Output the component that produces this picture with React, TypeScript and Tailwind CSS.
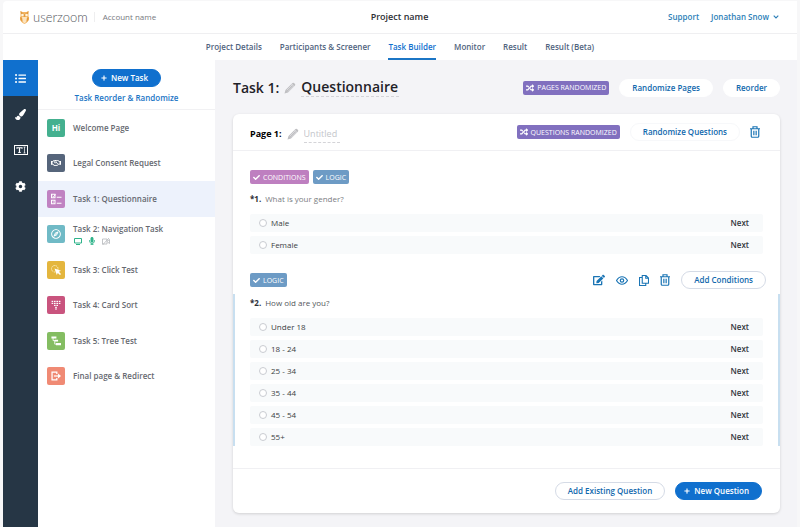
import type { ReactNode } from "react";
import { FaCheck, FaCog, FaListUl, FaPaintBrush, FaRandom, FaMicrophone, FaRegHandshake, FaRegCompass, FaEdit, FaPlus } from "react-icons/fa";

function Owl() {
  return (
    <svg viewBox="0 0 18 26" className="h-[13px] w-[9px]" aria-hidden="true">
      <path d="M1 0 L5 2 H13 L17 0 V10 L18 16 Q17 22 9 26 Q1 22 0 16 L1 10 Z" fill="#f3b562" />
      <path d="M4 12 H14 L13 21 L9 25 L5 21 Z" fill="#fbe3bf" />
      <path d="M1 0 L9 7 L17 0 L16 6 L9 12 L2 6 Z" fill="#e0983d" />
      <circle cx="5" cy="8" r="2.6" fill="#fff4dd" />
      <circle cx="13" cy="8" r="2.6" fill="#fff4dd" />
      <path d="M0 12 L4 14 L5 22 L1 18 Z M18 12 L14 14 L13 22 L17 18 Z" fill="#e59b3c" />
    </svg>
  );
}

function Pencil() {
  return (
    <svg viewBox="0 0 24 24" className="size-3 shrink-0" aria-hidden="true">
      <path d="M1 23 L3 16 L17 2 Q18.500 .8 20 2 L22 4 Q23.300 5.500 22 7 L8 21 Z" fill="#bfbfc2" />
      <path d="M5.500 16.500 L17 5 M8 19 L19.500 7.500 M15 4 L20 9" stroke="#ededf0" strokeWidth="1.200" />
    </svg>
  );
}

function Trash() {
  return (
    <svg viewBox="0 0 20 24" className="h-3 w-2.5" fill="none" stroke="currentColor" strokeWidth="2.400" aria-hidden="true">
      <path d="M0 5.500 H20 M6 5 V1.500 H14 V5 M2.500 6 V20.500 Q2.500 22.500 4.500 22.500 H15.500 Q17.500 22.500 17.500 20.500 V6" />
      <path d="M7.700 9.500 V18.500 M12.300 9.500 V18.500" />
    </svg>
  );
}

function Eye() {
  return (
    <svg viewBox="0 0 24 18" className="h-[9px] w-3" fill="none" stroke="currentColor" strokeWidth="2.400" aria-hidden="true">
      <path d="M1 9 Q5.500 1.500 12 1.500 Q18.500 1.500 23 9 Q18.500 16.500 12 16.500 Q5.500 16.500 1 9 Z" />
      <circle cx="12" cy="9" r="3.400" />
    </svg>
  );
}

function Copy() {
  return (
    <svg viewBox="0 0 20 22" className="h-[11px] w-2.5" fill="none" stroke="currentColor" strokeWidth="2.200" aria-hidden="true">
      <path d="M6.500 1 H14 L19 6 V16.500 H6.500 Z M13.500 1 V6.500 H19 M6 5 H1 V21 H13.500 V17" />
    </svg>
  );
}

function Plus() {
  return <FaPlus className="size-1.5" aria-hidden="true" />;
}

function TextTool() {
  return (
    <svg viewBox="0 0 28 20" className="h-2.5 w-3.5" fill="none" stroke="currentColor" aria-hidden="true">
      <rect x="1" y="1" width="26" height="18" strokeWidth="2" />
      <path d="M6 7.500 V5.500 H16 V7.500 M11 5.500 V15 M8.500 15 H13.500" strokeWidth="2.400" />
      <path d="M21 4 V16 M19 4 H23 M19 16 H23" strokeWidth="1.400" />
    </svg>
  );
}

function ChecklistGlyph() {
  return (
    <svg viewBox="0 0 24 24" className="size-3" fill="none" stroke="#fff" strokeWidth="2" aria-hidden="true">
      <rect x="3" y="2.500" width="7" height="7" />
      <rect x="3" y="14.500" width="7" height="7" />
      <path d="M5 6 L7 7.500 L11 3 M13.500 8.500 H23 M13.500 20.500 H23 M5.500 18 H7.500" />
    </svg>
  );
}

function ClickGlyph() {
  return (
    <svg viewBox="0 0 24 24" className="size-3" fill="none" aria-hidden="true">
      <circle cx="9.500" cy="9.500" r="6.500" stroke="#fdf3d0" strokeWidth="1.800" strokeDasharray="3 1.500" />
      <path d="M9 9 L22 13.500 L17.800 15.500 L22 20 L20 22 L15.500 17.800 L13.500 22 Z" fill="#fff" />
    </svg>
  );
}

function CardsGlyph() {
  const cells = [[1, 2], [7, 2], [13, 2], [19, 2], [1, 7], [7, 7], [13, 7], [19, 7], [7, 12], [13, 12], [10, 17], [10, 21]];
  return (
    <svg viewBox="0 0 24 25" className="size-2.5" fill="#fff" aria-hidden="true">
      {cells.map(([x, y]) => (
        <rect key={`${x}-${y}`} x={x} y={y} width="4" height="3" />
      ))}
    </svg>
  );
}

function TreeGlyph() {
  return (
    <svg viewBox="0 0 24 24" className="size-2.5" fill="#fff" aria-hidden="true">
      <path d="M1 1 H13 V6 H1 Z M9 9 H17 V13 H9 Z M12 17 H24 V22 H12 Z" />
      <path d="M5 5 V11 H10 M9 11 V19.500 H13" fill="none" stroke="#fff" strokeWidth="2" />
    </svg>
  );
}

function ExitGlyph() {
  return (
    <svg viewBox="0 0 24 24" className="size-2.5" fill="none" stroke="#fff" strokeWidth="3" aria-hidden="true">
      <path d="M14 7 V2.500 H2.500 V21.500 H14 V17" />
      <path d="M7 12 H19" />
      <path d="M17 6 L24 12 L17 18 Z" fill="#fff" stroke="none" />
    </svg>
  );
}

function Requirements() {
  return (
    <span className="flex items-center gap-1.5 pl-px">
      <svg viewBox="0 0 16 14" className="h-[7px] w-2" fill="none" stroke="#2fb38a" strokeWidth="2" role="img" aria-label="Screen recording">
        <path d="M1 1 H15 V10 H1 Z M4 13 H12" />
      </svg>
      <FaMicrophone className="size-2 text-[#2fb38a]" role="img" aria-label="Audio recording" />
      <svg viewBox="0 0 16 14" className="h-[7px] w-2" fill="none" stroke="#b4b6ba" strokeWidth="1.600" role="img" aria-label="Camera off">
        <path d="M1 2 H10 V12 H1 Z M11 6 L15 3 V11 L11 8 M1 14 L14 0" />
      </svg>
    </span>
  );
}

type Task = { name: string; color: string; glyph: ReactNode; active?: boolean; extras?: boolean };

const tasks: Task[] = [
  { name: "Welcome Page", color: "bg-[#44b08f]", glyph: <span className="text-[8px] font-bold">Hi</span> },
  { name: "Legal Consent Request", color: "bg-[#56657b]", glyph: <FaRegHandshake className="size-2.5" /> },
  { name: "Task 1: Questionnaire", color: "bg-[#c082c2]", glyph: <ChecklistGlyph />, active: true },
  { name: "Task 2: Navigation Task", color: "bg-[#70bac6]", glyph: <FaRegCompass className="size-2.5" />, extras: true },
  { name: "Task 3: Click Test", color: "bg-[#e4b63e]", glyph: <ClickGlyph /> },
  { name: "Task 4: Card Sort", color: "bg-[#c9547e]", glyph: <CardsGlyph /> },
  { name: "Task 5: Tree Test", color: "bg-[#84bd62]", glyph: <TreeGlyph /> },
  { name: "Final page & Redirect", color: "bg-[#f08a74]", glyph: <ExitGlyph /> },
];

const tabs = ["Project Details", "Participants & Screener", "Task Builder", "Monitor", "Result", "Result (Beta)"];

function Badge({ tone, icon, children }: { tone: string; icon: ReactNode; children: ReactNode }) {
  return (
    <span className={`flex h-3.5 items-center gap-[3px] rounded-xs px-[3px] text-[7px] leading-none font-medium whitespace-nowrap text-white ${tone}`}>
      {icon}
      {children}
    </span>
  );
}

const check = <FaCheck className="size-[7px]" aria-hidden="true" />;
const shuffle = <FaRandom className="size-2" aria-hidden="true" />;

function Pill({ variant, children }: { variant: string; children: ReactNode }) {
  return (
    <button type="button" className={`flex h-[18px] items-center justify-center gap-1 rounded-full border pr-3 whitespace-nowrap ${variant}`}>
      {children}
    </button>
  );
}

const solid = "border-[#1070ce] bg-[#1070ce] pl-2 font-semibold text-white";
const plain = "border-white bg-white pl-3 font-semibold text-[#1068ad]";
const outlined = "border-[#d5dbe6] bg-white pl-3 font-semibold text-[#1068ad]";
const faint = "border-[#f7f8fa] bg-white pl-3 font-semibold text-[#1068ad]";

function Question({ id, title, muted, answers }: { id: number; title: string; muted?: boolean; answers: string[] }) {
  return (
    <fieldset>
      <legend className={`mb-1.5 flex h-[18px] items-center gap-1 ${muted ? "text-[#7b7d82]" : "text-[#54575c]"}`}>
        <b className="text-[#2d3036]">*{id}.</b>
        {title}
      </legend>
      <ul className="flex flex-col gap-1">
        {answers.map((answer) => (
          <li key={answer} className="flex h-[18px] items-center justify-between rounded-xs bg-[#f8fafb] pr-3.5 pl-[9px]">
            <label className="flex items-center gap-1 text-[#3b3e43]">
              <input type="radio" name={`question-${id}`} className="size-2 appearance-none rounded-full border border-[#c9ccd1] bg-white checked:border-[#1070ce]" />
              {answer}
            </label>
            <span className="font-semibold text-[#33373d]">Next</span>
          </li>
        ))}
      </ul>
    </fieldset>
  );
}

export default function App() {
  return (
    <div className="min-h-screen bg-[#f7f7f8] px-[3px] pt-px font-['Open_Sans','Noto_Sans',sans-serif] text-[8px] leading-3 text-[#55585e]">
      <div className="flex min-h-[calc(100vh-1px)] flex-col overflow-hidden rounded-tl-sm">
        <header className="grid h-[33px] grid-cols-[1fr_auto_1fr] items-center border-b border-[#efeff1] bg-white pr-[18px] pl-[17px]">
          <div className="flex items-center">
            <a href="#home" className="flex items-center gap-1">
              <Owl />
              <span className="font-['Lato',sans-serif] text-[13px] leading-4 font-light text-[#55585e]">userzoom</span>
            </a>
            <span className="ml-1.5 h-2.5 border-l border-[#eeeeef] pl-2 leading-[10px] text-[#77797e]">Account name</span>
          </div>
          <h1 className="text-[9px] font-semibold text-[#2d2f34]">Project name</h1>
          <div className="flex items-center justify-end gap-3 font-semibold text-[#2d7fb8]">
            <a href="#support">Support</a>
            <button type="button" className="flex items-center gap-1 font-semibold">
              Jonathan Snow
              <svg viewBox="0 0 10 7" className="h-1 w-1.5" fill="none" stroke="currentColor" strokeWidth="2" aria-hidden="true">
                <path d="M1 1 L5 5 L9 1" />
              </svg>
            </button>
          </div>
        </header>

        <nav className="flex h-[26px] justify-center gap-[18px] bg-white font-semibold text-[#50637e]" aria-label="Project">
          {tabs.map((tab) => (
            <a key={tab} href="#tab" className={`flex items-center border-b-2 pt-0.5 ${tab === "Task Builder" ? "border-[#1b75c5] text-[#1070ce]" : "border-transparent"}`}>
              {tab}
            </a>
          ))}
        </nav>

        <div className="flex flex-1">
          <nav className="flex w-[35px] shrink-0 flex-col bg-[#263645] text-white" aria-label="Tools">
            <button type="button" aria-label="Tasks" className="flex h-9 items-center justify-center bg-[#1070ce]">
              <FaListUl className="size-[11px]" />
            </button>
            <button type="button" aria-label="Appearance" className="flex h-9 items-center justify-center">
              <FaPaintBrush className="size-[11px]" />
            </button>
            <button type="button" aria-label="Texts" className="flex h-9 items-center justify-center">
              <TextTool />
            </button>
            <button type="button" aria-label="Settings" className="flex h-9 items-center justify-center">
              <FaCog className="size-[11px]" />
            </button>
          </nav>

          <aside className="w-[177px] shrink-0 bg-white">
            <div className="flex h-[50px] flex-col items-center gap-[5px] border-b border-[#f1f1f3] pt-[9px]">
              <Pill variant={solid}>
                <Plus />
                New Task
              </Pill>
              <a href="#reorder" className="font-semibold text-[#1b75c5]">Task Reorder &amp; Randomize</a>
            </div>
            <ul className="grid h-[284px] auto-rows-fr">
              {tasks.map((task) => (
                <li key={task.name} className={task.active ? "bg-[#edf2fc]" : ""}>
                  <a href="#task" className="flex h-full items-center gap-2 pl-[9px] font-semibold text-[#666970]">
                    <span className={`flex size-[18px] items-center justify-center rounded-xs text-white ${task.color}`}>{task.glyph}</span>
                    <span className="flex flex-col gap-0.5">
                      {task.name}
                      {task.extras && <Requirements />}
                    </span>
                  </a>
                </li>
              ))}
            </ul>
          </aside>

          <main className="min-w-0 flex-1 bg-[#f4f4f7] pt-4 pr-[17px] pb-3 pl-[18px]">
            <div className="flex h-[23px] items-center justify-between">
              <div className="flex items-center gap-[5px] text-[14px] leading-[18px] font-semibold text-[#1f2228]">
                <h2>Task 1:</h2>
                <Pencil />
                <input aria-label="Task name" defaultValue="Questionnaire" className="h-[18px] w-[98px] border-b border-dashed border-[#d4d4d8] bg-transparent outline-none" />
              </div>
              <div className="flex items-center gap-2.5">
                <Badge tone="bg-[#8170bf]" icon={shuffle}>PAGES RANDOMIZED</Badge>
                <Pill variant={plain}>Randomize Pages</Pill>
                <Pill variant={plain}>Reorder</Pill>
              </div>
            </div>

            <section className="mt-[15px] rounded-md bg-white shadow-[0_1px_3px_rgba(0,0,0,0.15)]">
              <div className="flex h-[37px] items-center justify-between border-b border-[#f0f0f3] pr-5 pl-[17px]">
                <div className="flex items-center gap-[5px] pt-1 text-[9px]">
                  <h3 className="font-bold text-black">Page 1:</h3>
                  <Pencil />
                  <input aria-label="Page name" placeholder="Untitled" className="h-[18px] w-9 border-b border-dashed border-[#d4d4d8] outline-none placeholder:text-[#c3c5ca]" />
                </div>
                <div className="flex items-center gap-2.5">
                  <Badge tone="bg-[#8170bf]" icon={shuffle}>QUESTIONS RANDOMIZED</Badge>
                  <Pill variant={faint}>Randomize Questions</Pill>
                  <button type="button" aria-label="Delete page" className="text-[#1b75b5]">
                    <Trash />
                  </button>
                </div>
              </div>

              <div className="flex flex-col gap-1.5 px-[17px] pt-[19px]">
                <div className="flex gap-1">
                  <Badge tone="bg-[#be7fc0]" icon={check}>CONDITIONS</Badge>
                  <Badge tone="bg-[#6d9bc5]" icon={check}>LOGIC</Badge>
                </div>
                <Question id={1} title="What is your gender?" muted answers={["Male", "Female"]} />
              </div>

              <div className="flex items-center justify-between pt-[17px] pr-3.5 pb-[5px] pl-[17px]">
                <Badge tone="bg-[#6d9bc5]" icon={check}>LOGIC</Badge>
                <div className="flex items-center gap-[11px] text-[#1b75b5]">
                  <button type="button" aria-label="Edit"><FaEdit className="size-3" /></button>
                  <button type="button" aria-label="Preview"><Eye /></button>
                  <button type="button" aria-label="Duplicate"><Copy /></button>
                  <button type="button" aria-label="Delete"><Trash /></button>
                  <Pill variant={outlined}>Add Conditions</Pill>
                </div>
              </div>
              <div className="border-x-2 border-[#c8dff0] px-[15px]">
                <Question id={2} title="How old are you?" answers={["Under 18", "18 - 24", "25 - 34", "35 - 44", "45 - 54", "55+"]} />
              </div>

              <div className="mt-[22px] flex h-[45px] items-center justify-end gap-2.5 border-t border-[#f0f0f3] pr-[18px]">
                <Pill variant={outlined}>Add Existing Question</Pill>
                <Pill variant={solid}>
                  <Plus />
                  New Question
                </Pill>
              </div>
            </section>
          </main>
        </div>
      </div>
    </div>
  );
}
